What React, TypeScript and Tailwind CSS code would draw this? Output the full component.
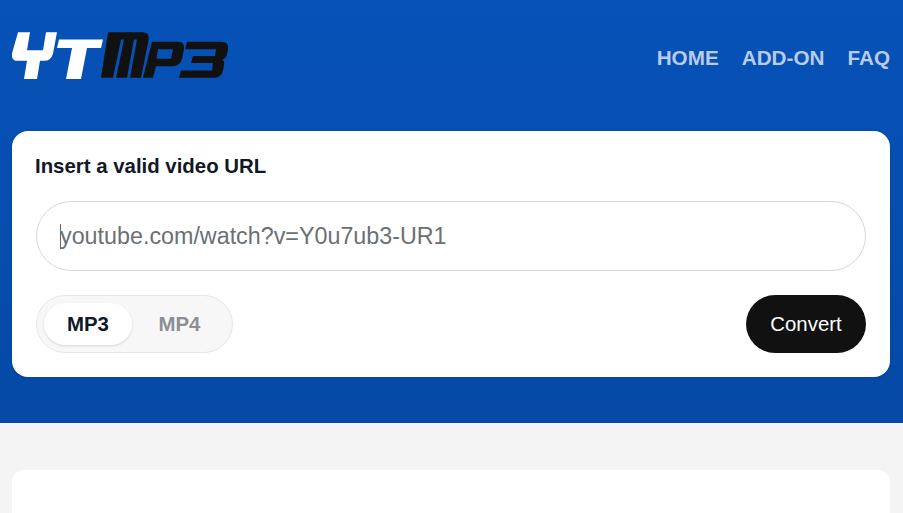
export default function App() {
  return (
    <div className="h-[513px] overflow-hidden bg-[#f4f4f4] font-['Liberation_Sans',Arial,sans-serif]">
      <section className="h-[423px] bg-gradient-to-b from-[#0652b8] to-[#0649a6] pl-3 pr-[13px]">
        <header className="flex h-[131px] items-start justify-between">
          <svg className="mt-[30px]" width="220" height="51" viewBox="12 31 220 48" preserveAspectRatio="none" role="img" aria-label="YTMP3">
            <path fill="#fff" d="M18 33H30L27 50H43L46 33H57L53 53Q51 60 44 60H40L37 77H24L27 60H18Q11 60 12 53Z" />
            <path fill="#fff" d="M59 40H103L101 48H87L81 77H66L72 48H57Z" />
            <path fill="#111" d="M108 33H143Q150 33 148.5 41L141 76H130L137 40H134L127 76H116L124 40H121L113 76H101Z" />
            <path fill="#111" fillRule="evenodd" d="M152 42H178Q185 42 184 49L182 58Q180 65 173 65H156L153 76H143ZM158 49L156.5 58H171L173 49Z" />
            <path fill="#111" d="M187 42H221Q229 42 228 49L227 54Q226 58 222 59Q225 60 224 64L223 69Q221 76 214 76H179L181 69H212L213 62H191L193 55.5H215L216 49H185Z" />
          </svg>
          <nav className="mt-[46px] flex gap-[23px] text-[20.7px] leading-[24px] font-bold text-[#b9cbe9]">
            <span>HOME</span>
            <span>ADD-ON</span>
            <span>FAQ</span>
          </nav>
        </header>
        <div className="h-[246px] rounded-2xl bg-white px-6 pt-6 shadow-sm">
          <p className="-ml-px text-[20.4px] leading-[22px] font-bold text-[#111827]">Insert a valid video URL</p>
          <div className="mt-[24px] flex h-[70px] items-center rounded-full border border-[#d3d9dd] pl-[23px] text-[23.3px] text-[#6b7075]">
            <span className="mr-[-1px] h-[25px] w-px bg-[#666]" />
            youtube.com/watch?v=Y0u7ub3-UR1
          </div>
          <div className="mt-6 flex items-center justify-between">
            <div className="flex h-[58px] w-[197px] items-center rounded-full border border-[#e5e7e9] bg-[#f7f7f8] pl-[7px] text-[20.4px] font-bold">
              <span className="flex h-[42px] w-[88px] items-center justify-center rounded-full bg-white text-[#111827] shadow-sm">MP3</span>
              <span className="flex h-[42px] w-[95px] items-center justify-center text-[#8b8f94]">MP4</span>
            </div>
            <button className="h-[58px] w-[120px] rounded-full bg-[#111] text-[20.4px] text-white">Convert</button>
          </div>
        </div>
      </section>
      <main className="pl-3 pr-[13px] pt-[47px]">
        <div className="h-20 rounded-xl bg-white" />
      </main>
    </div>
  );
}
